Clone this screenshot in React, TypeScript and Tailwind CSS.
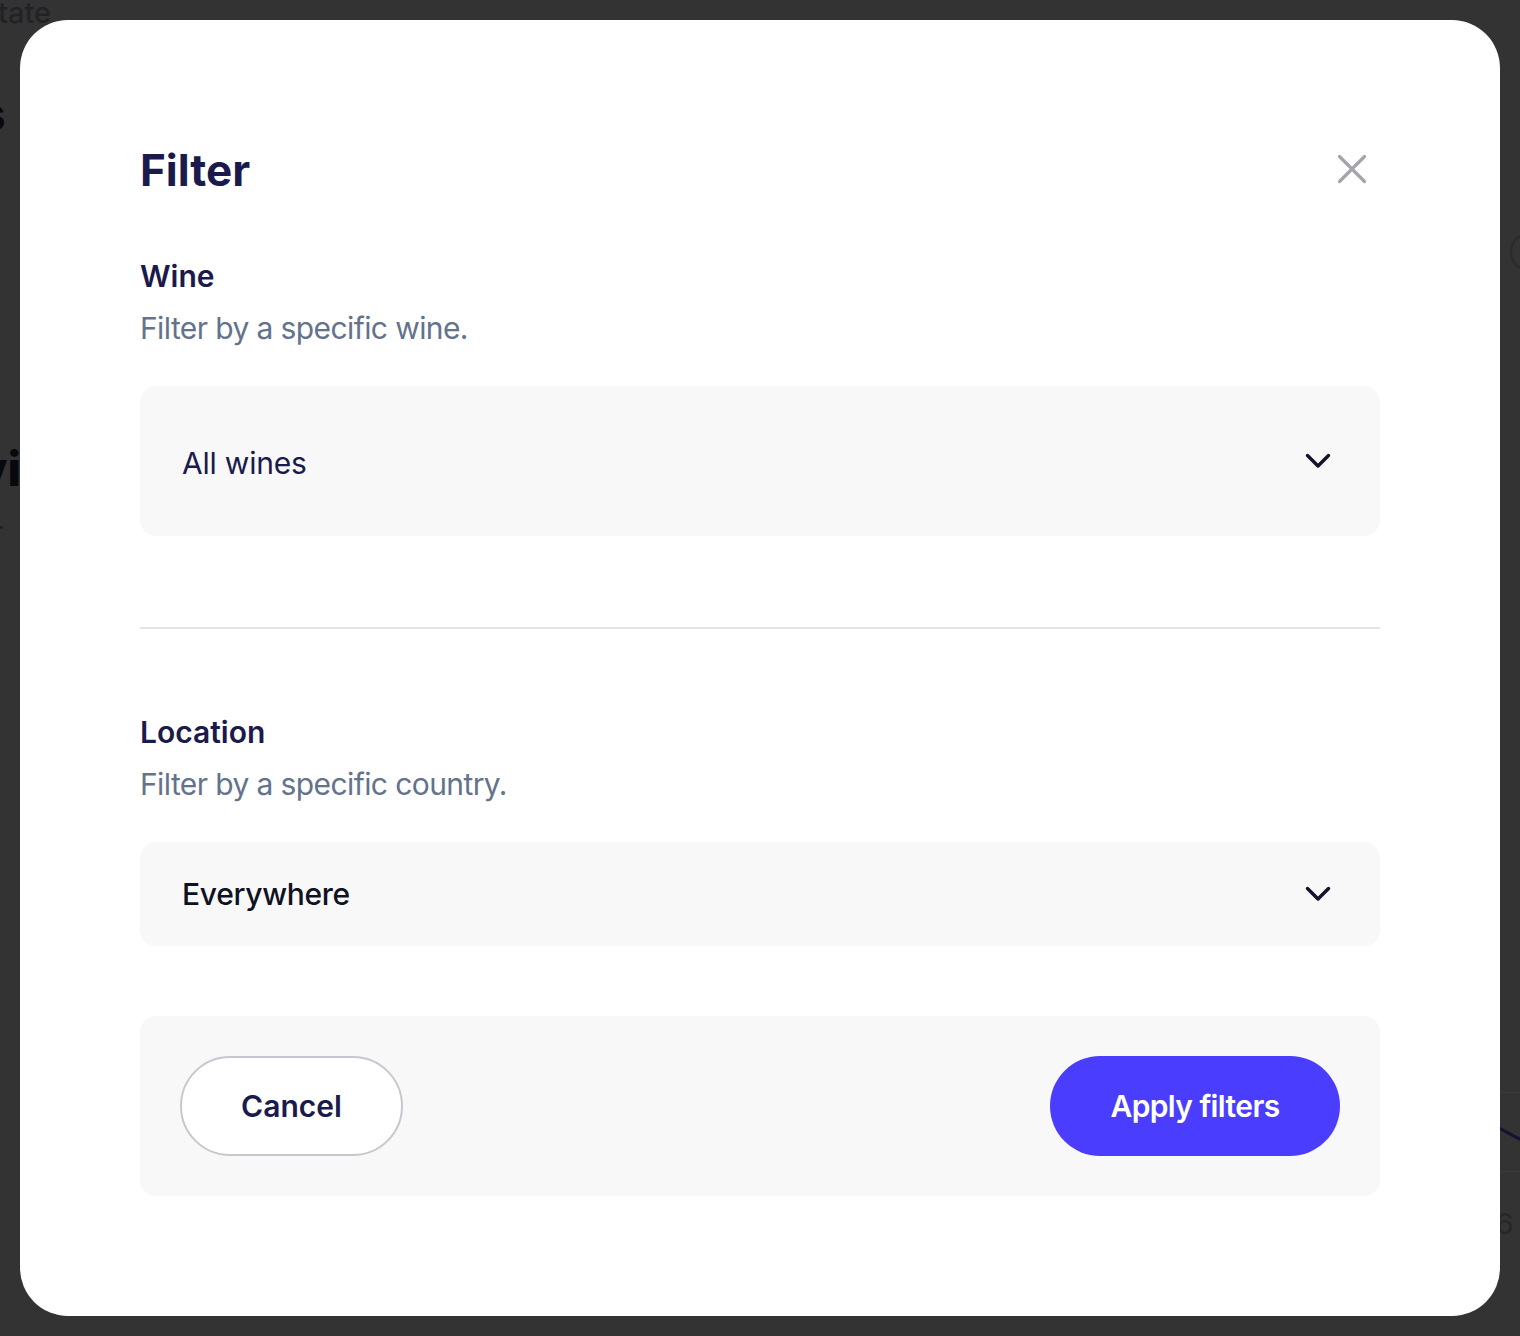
import React from "react";

function Chevron() {
  return (
    <svg width="26" height="17" viewBox="0 0 26 17" fill="none" className="shrink-0">
      <path d="M2.5 2.5 L13 13 L23.5 2.5" stroke="#14132a" strokeWidth="3.4" strokeLinecap="round" strokeLinejoin="round" />
    </svg>
  );
}

function CloseIcon() {
  return (
    <svg width="32" height="32" viewBox="0 0 32 32" fill="none">
      <path d="M3.5 3.5 L28.5 28.5 M28.5 3.5 L3.5 28.5" stroke="#a4a3ae" strokeWidth="3.2" strokeLinecap="round" />
    </svg>
  );
}

export default function App() {
  return (
    <div className="relative min-h-[1336px] w-full overflow-hidden bg-[#333333] font-['Inter',sans-serif]">
      {/* dimmed page behind the dialog */}
      <div aria-hidden className="pointer-events-none absolute inset-0">
        <span className="absolute left-[-2px] top-[-9px] text-[29px] font-medium text-[#222226]">tate</span>
        <span className="absolute left-[-22px] top-[78px] text-[48px] font-extrabold text-[#08080f]">s</span>
        <span className="absolute left-[-22px] top-[433px] text-[48px] font-extrabold text-[#08080f]">vi</span>
        <span className="absolute left-[-8px] top-[510px] text-[30px] font-normal text-[#1e1e22]">r</span>
        <div className="absolute left-[1510px] top-[232px] h-[40px] w-[40px] rounded-full border-2 border-[#2a2a2a]" />
        <div className="absolute left-[1500px] top-[1092px] h-px w-[20px] bg-[#3a3a3a]" />
        <div className="absolute left-[1500px] top-[1171px] h-px w-[20px] bg-[#3a3a3a]" />
        <div className="absolute left-[1498px] top-[1133px] h-[3px] w-[26px] rotate-[28deg] bg-[#141235]" />
        <span className="absolute left-[1496px] top-[1203px] text-[28px] text-[#262626]">6</span>
      </div>

      <div className="relative m-[20px] flex flex-col rounded-[48px] bg-white px-[120px] pb-[120px] pt-[126px]">
        <div className="flex h-[48px] items-center justify-between">
          <h1 className="text-[44px] font-bold leading-[48px] text-[#1b1a4c]">Filter</h1>
          <button className="mr-[12px] mt-[-3px] flex items-center justify-center">
            <CloseIcon />
          </button>
        </div>

        <h2 className="mt-16 text-[30px] font-semibold leading-[36px] text-[#1b1a4c]">Wine</h2>
        <p className="mt-4 text-[30px] font-normal leading-[36px] tracking-[-0.6px] text-[#64728b]">Filter by a specific wine.</p>
        <div className="mt-10 flex h-[150px] items-center justify-between rounded-[16px] bg-[#f8f8f8] pl-[42px] pr-[49px]">
          <span className="mt-1 text-[30px] font-normal leading-[36px] tracking-[-0.2px] text-[#1b1a4c]">All wines</span>
          <Chevron />
        </div>

        <div className="mt-[91px] h-[2px] bg-[#e3e3e8]" />

        <h2 className="mt-[85px] text-[30px] font-semibold leading-[36px] text-[#1b1a4c]">Location</h2>
        <p className="mt-4 text-[30px] font-normal leading-[36px] tracking-[-0.6px] text-[#64728b]">Filter by a specific country.</p>
        <div className="mt-10 flex h-[104px] items-center justify-between rounded-[16px] bg-[#f8f8f8] pl-[42px] pr-[49px]">
          <span className="text-[30px] font-medium leading-[36px] tracking-[-0.3px] text-[#0f1222]">Everywhere</span>
          <Chevron />
        </div>

        <div className="mt-[70px] flex h-[180px] items-center justify-between rounded-[16px] bg-[#f8f8f8] px-10">
          <button className="flex h-[100px] w-[223px] items-center justify-center rounded-full border-2 border-[#c8c7cf] bg-white text-[30px] font-semibold text-[#1b1a4c]">
            Cancel
          </button>
          <button className="flex h-[100px] w-[290px] items-center justify-center rounded-full bg-[#4a3dfe] text-[30px] font-semibold tracking-[-0.6px] text-white">
            Apply filters
          </button>
        </div>
      </div>
    </div>
  );
}
